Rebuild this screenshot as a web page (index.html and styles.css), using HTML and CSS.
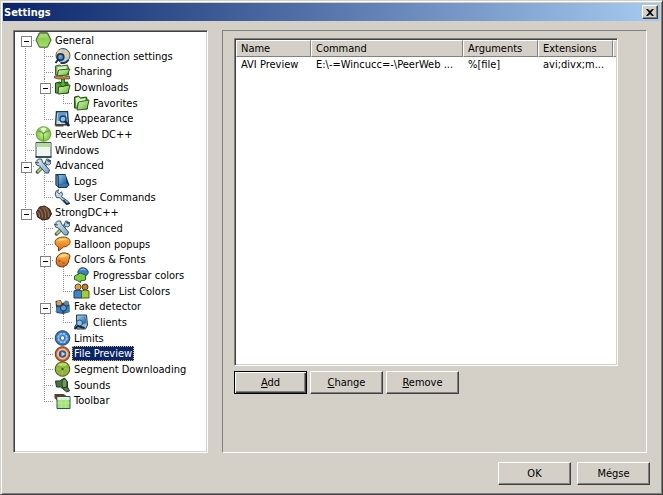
FILE: index.html
```html
<!DOCTYPE html>
<html lang="hu">

<head>
<meta charset="utf-8">
<title>Settings</title>
<link rel="stylesheet" href="styles.css">
</head>
<body>
<svg class="sprites" width="0" height="0" aria-hidden="true">
  <defs>
    <linearGradient id="green" x1="0" y1="0" x2="0" y2="1"><stop offset="0" stop-color="#7cba45"/><stop offset="1" stop-color="#a6e465"/></linearGradient>
    <linearGradient id="folder" x1="0" y1="0" x2="1" y2="1"><stop offset="0" stop-color="#e2f9c0"/><stop offset="1" stop-color="#62b32f"/></linearGradient>
    <linearGradient id="orange" x1="0" y1="0" x2="0" y2="1"><stop offset="0" stop-color="#ffc04a"/><stop offset="1" stop-color="#e2600c"/></linearGradient>
    <linearGradient id="blue" x1="0" y1="0" x2="1" y2="1"><stop offset="0" stop-color="#8cc4ee"/><stop offset="1" stop-color="#1d5596"/></linearGradient>
    <linearGradient id="steel" x1="0" y1="0" x2="1" y2="1"><stop offset="0" stop-color="#e4eef5"/><stop offset="1" stop-color="#7ba3c4"/></linearGradient>
    <radialGradient id="ball"><stop offset="0" stop-color="#d9f3b0"/><stop offset="1" stop-color="#79c43a"/></radialGradient>

    <symbol id="hexagon" viewBox="0 0 16 16"><path d="M4 .8h8L15.500 8 12 15.200H4L.5 8z" fill="url(#green)" stroke="#35561f"/><path d="M4.600 2h6.800l2 4.500q-5-2-10.800 0z" fill="#c7eb9b" opacity=".5"/></symbol>
    <symbol id="globe" viewBox="0 0 16 16"><circle cx="8.500" cy="7.500" r="7" fill="#a9c9ee" stroke="#3c5878"/><path d="M3 3l4-2 1 3-2 2-4 1zM10 2l4 3v4l-3 0-2-3zM10 11l3 0-2 2z" fill="#f2cd80"/><circle cx="6" cy="9" r="3.200" fill="#6a9bd0" stroke="#173862" stroke-width="1.800"/><path d="M4 11l-3 4" stroke="#1b3050" stroke-width="2"/><path d="M6 15q5 1 8-3" stroke="#23374f" fill="none" stroke-width="2"/></symbol>
    <symbol id="folder-open" viewBox="0 0 16 16"><path d="M1 13V2l4-1 2 2 6-1 1 4v8z" fill="#4d9130" stroke="#245018"/><path d="M2 3l3-1 2 2 5-1v4l-8 1-1 5z" fill="#d9f4bb"/><path d="M5 7l10.500-2-2 9-10 1z" fill="url(#folder)" stroke="#2c6420"/></symbol>
    <symbol id="folder-share" viewBox="0 0 16 16"><path d="M1 11V2l4-1 2 1 6-1 1 3v7z" fill="#75b44c" stroke="#38642a"/><path d="M3 3l9-1v4L3 8z" fill="#ddf3c5"/><path d="M4 6l11.500-1-3 6-10 1z" fill="url(#folder)" stroke="#2c6420"/><path d="M0 12l7 0 2 1 6-1v3H4l-4-1z" fill="#c58a45" stroke="#5d3d1c" stroke-width=".7"/></symbol>
    <symbol id="folder-down" viewBox="0 0 16 16"><path d="M1 14V4l4-1 2 1 6-1 1 4v7z" fill="#5da23a" stroke="#1c4514"/><path d="M4 8l11.500-2-2 8-10 1z" fill="url(#folder)" stroke="#245018"/><path d="M7 0h3v4h3L8.500 8 4 4h3z" fill="#4fb52d" stroke="#1c4a14" stroke-width=".8"/></symbol>
    <symbol id="appearance" viewBox="0 0 16 16"><path d="M2 .7h11l1 13-13 0z" fill="#c8dde8" stroke="#193f58" stroke-width="1.400"/><path d="M3.500 2h8l.5 8H3z" fill="#5b9dd4"/><circle cx="8.500" cy="8" r="3" fill="#8ec0ec" stroke="#1d4066" stroke-width="1.300"/><path d="M10.500 10l4 5" stroke="#15293d" stroke-width="2.800"/><path d="M1 13h8v2.500H1z" fill="#54402c"/></symbol>
    <symbol id="ball-green" viewBox="0 0 16 16"><circle cx="8" cy="8" r="7.300" fill="url(#ball)" stroke="#69a53e"/><path d="M5 2.500q3-2 6 0L8 7z" fill="#f1fbe2"/><path d="M2 5q4 0 6 3 2-3 6-3M8 8v7" fill="none" stroke="#5aa52f" stroke-width="1.200"/></symbol>
    <symbol id="window" viewBox="0 0 16 16"><path d="M.5.500h15v14.500H.5z" fill="#eef5f3" stroke="#3f5260"/><path d="M1 1h14v4H1z" fill="#b4dc97"/><path d="M0 15h16" stroke="#1d313e" stroke-width="1.500"/></symbol>
    <symbol id="tools" viewBox="0 0 16 16"><path d="M2 14L13 3" stroke="#3f5546" stroke-width="3.500" stroke-linecap="round"/><path d="M2 14l5-5" stroke="#9fd36c" stroke-width="2.200"/><path d="M7 9l6-6" stroke="#dbe6ee" stroke-width="1.500"/><path d="M1 3l2-2 3 0 1 3 7 8-1 3-3 0-6-7-3-1-1-3 2 1 1 0z" fill="url(#steel)" stroke="#304e64"/><path d="M10 4l1-3 2 0-1 2 2 1 1-2 0 4-2 1-3-1z" fill="#b5cfe0" stroke="#304e64" stroke-width=".8"/></symbol>
    <symbol id="logs" viewBox="0 0 16 16"><path d="M1 1h10l1 3 3 8-3 3H4l-3-3z" fill="#17354f"/><path d="M4 2h7l1 8-8 2z" fill="url(#blue)"/><path d="M4 12l8-2 2 2-3 2H4z" fill="#3d79b5"/><path d="M1.500 1.500V12l2.500 2.500V3z" fill="#557da2" stroke="#173049" stroke-width=".6"/></symbol>
    <symbol id="wrench" viewBox="0 0 16 16"><path d="M4 .7l-1 3 2 1 2-2 1 3-1 2 7 5 1 2-3 1-7-7-3 0L.7 5l1-3z" fill="url(#steel)" stroke="#38536d"/><path d="M9 11l3 4 3-1" stroke="#1f3346" fill="none" stroke-width="1.500"/></symbol>
    <symbol id="shell" viewBox="0 0 16 16"><path d="M1 7l3-5 5-1 5 3 2 5-3 5-6 1-5-3z" fill="#5c3b29" stroke="#2d1a12"/><path d="M3 4q4 1 4 9M6 2q5 2 4 12M9 2q5 3 4 10" stroke="#8a6450" fill="none" stroke-width="1.300"/><path d="M1 7q3 0 3 5" stroke="#a58a76" fill="none"/></symbol>
    <symbol id="balloon" viewBox="0 0 16 16"><path d="M8 1C-1.500 2-1 9 4 11l0 4 5-4c9-1 9-10-1-10z" fill="url(#orange)" stroke="#8d3c0c"/><path d="M3 5q4-4 10-1-5 0-10 1z" fill="#ffe3a0"/></symbol>
    <symbol id="palette" viewBox="0 0 16 16"><path d="M2 6q3-6 9-5 6 1 4 5-1 2-1 4-1 4-6 5-8 0-6-9z" fill="url(#orange)" stroke="#6f3514"/><path d="M4 5q4-4 9-2-2 3-9 2z" fill="#ffdf9c"/><circle cx="5" cy="9" r="1.300" fill="#d0452a"/><circle cx="9" cy="11" r="1.300" fill="#5c8474"/></symbol>
    <symbol id="progress" viewBox="0 0 16 16"><path d="M5 3q3-4 8-1 4 4-1 7l-2 2-3-3q-4-1-2-5z" fill="#3b7fce" stroke="#1c3c68"/><path d="M7 3q3-2 5 0" stroke="#a7d0f4" fill="none"/><path d="M1 9l6-3 5 2 0 5-5 1 0 1.500-3-2-3-1z" fill="#79cf3f" stroke="#296423"/></symbol>
    <symbol id="users" viewBox="0 0 16 16"><circle cx="4.500" cy="4" r="3" fill="#dca63f" stroke="#694619"/><circle cx="11.500" cy="4" r="3" fill="#b9822f" stroke="#523816"/><path d="M.5 15V8l4-1 4 1v7z" fill="#3e83cd" stroke="#1a3963"/><path d="M8 15V8l4-1 3.500 1v7z" fill="#a5cc37" stroke="#40641c"/></symbol>
    <symbol id="fake" viewBox="0 0 16 16"><path d="M1 2l5-1 2 3 5-2 2 4v7l-6 2-7-1z" fill="#263e56"/><circle cx="4.500" cy="4" r="2.500" fill="#d99b44"/><circle cx="12" cy="4" r="2.500" fill="#65869c"/><path d="M1 13l1-5 6 0v6zM9 8l6-1v6l-5 1z" fill="#387dbb"/><circle cx="9" cy="9" r="3" fill="#5d9cd6" stroke="#1b3c5c"/></symbol>
    <symbol id="clients" viewBox="0 0 16 16"><path d="M3 1h10l1 10-2 4H3l-2-2 2-3z" fill="#98b9cd" stroke="#243c50"/><path d="M6 3l6-1 1 7-5 2-3-4z" fill="url(#blue)"/><circle cx="6" cy="9" r="3" fill="#8dbfea" stroke="#245181"/><path d="M1 15l3-3 7 2" stroke="#17293a" stroke-width="2" fill="none"/></symbol>
    <symbol id="gear" viewBox="0 0 16 16"><circle cx="8" cy="8" r="7.300" fill="#3477bd" stroke="#1e477b"/><circle cx="8" cy="8" r="4.500" fill="#5b98d2" stroke="#a5cdf0" stroke-width="1.500" stroke-dasharray="2.500 1"/><circle cx="8" cy="8" r="2.300" fill="#f8fcff" stroke="#2b67a8"/></symbol>
    <symbol id="preview" viewBox="0 0 16 16"><circle cx="8" cy="8" r="7.300" fill="#e06119" stroke="#7c3214"/><circle cx="8" cy="8" r="5" fill="#d2dce8" stroke="#ffc58e"/><circle cx="8" cy="8" r="3.800" fill="#2f5580"/><path d="M7 5.500v5L11 8z" fill="#c6d8e8"/></symbol>
    <symbol id="segment" viewBox="0 0 16 16"><circle cx="8" cy="8" r="7.300" fill="#8fb238" stroke="#3a561b"/><path d="M3 4q5-4 10 0-5 2-10 0z" fill="#c8dc78"/><path d="M2 8h12M8 3v10" stroke="#a9c752"/><circle cx="8" cy="8" r="1.200" fill="#3e5718"/></symbol>
    <symbol id="sound" viewBox="0 0 16 16"><path d="M1 4l4 0 5-3 3 4 0 7-3 1-4-3-4 0z" fill="#4b7440" stroke="#1d3819"/><ellipse cx="10" cy="6.500" rx="2.500" ry="4.500" fill="#6f9a5e" stroke="#23421e"/><path d="M8 11l5-1 2 4-3 1z" fill="#55804a" stroke="#233c20"/></symbol>
    <symbol id="toolbar" viewBox="0 0 16 16"><path d="M0 1h9l3 2v5H3L0 5z" fill="#6f3726"/><path d="M2.500 3.500h13v12h-13z" fill="#a4e273" stroke="#1f526d"/><path d="M3 4h12v3H3z" fill="#e3f5d8"/><path d="M7 6v9M11 6v9M3 10h12" stroke="#bdec94"/></symbol>
  </defs>
</svg>

<form class="window">
  <header class="titlebar">
    <h1 class="titlebar__text">Settings</h1>
    <button class="titlebar__close" type="button" aria-label="Close">
      <svg width="8" height="7" viewBox="0 0 8 7"><path d="M0 0h2l2 2 2-2h2L5 3.500 8 7H6L4 5 2 7H0l3-3.500z"/></svg>
    </button>
  </header>

  <main class="content">
    <ul class="tree" role="tree" aria-label="Settings">
      <li class="node" role="treeitem" aria-level="1" aria-expanded="true"><i class="guide guide--first guide--box"></i><svg class="node__icon"><use href="#hexagon"/></svg><span class="node__label">General</span></li>
      <li class="node" role="treeitem" aria-level="2"><i class="guide guide--line"></i><i class="guide guide--tee"></i><svg class="node__icon"><use href="#globe"/></svg><span class="node__label">Connection settings</span></li>
      <li class="node" role="treeitem" aria-level="2"><i class="guide guide--line"></i><i class="guide guide--tee"></i><svg class="node__icon"><use href="#folder-share"/></svg><span class="node__label">Sharing</span></li>
      <li class="node" role="treeitem" aria-level="2" aria-expanded="true"><i class="guide guide--line"></i><i class="guide guide--tee guide--box"></i><svg class="node__icon"><use href="#folder-down"/></svg><span class="node__label">Downloads</span></li>
      <li class="node" role="treeitem" aria-level="3"><i class="guide guide--line"></i><i class="guide guide--line"></i><i class="guide guide--last"></i><svg class="node__icon"><use href="#folder-open"/></svg><span class="node__label">Favorites</span></li>
      <li class="node" role="treeitem" aria-level="2"><i class="guide guide--line"></i><i class="guide guide--last"></i><svg class="node__icon"><use href="#appearance"/></svg><span class="node__label">Appearance</span></li>
      <li class="node" role="treeitem" aria-level="1"><i class="guide guide--tee"></i><svg class="node__icon"><use href="#ball-green"/></svg><span class="node__label">PeerWeb DC++</span></li>
      <li class="node" role="treeitem" aria-level="1"><i class="guide guide--tee"></i><svg class="node__icon"><use href="#window"/></svg><span class="node__label">Windows</span></li>
      <li class="node" role="treeitem" aria-level="1" aria-expanded="true"><i class="guide guide--tee guide--box"></i><svg class="node__icon"><use href="#tools"/></svg><span class="node__label">Advanced</span></li>
      <li class="node" role="treeitem" aria-level="2"><i class="guide guide--line"></i><i class="guide guide--tee"></i><svg class="node__icon"><use href="#logs"/></svg><span class="node__label">Logs</span></li>
      <li class="node" role="treeitem" aria-level="2"><i class="guide guide--line"></i><i class="guide guide--last"></i><svg class="node__icon"><use href="#wrench"/></svg><span class="node__label">User Commands</span></li>
      <li class="node" role="treeitem" aria-level="1" aria-expanded="true"><i class="guide guide--last guide--box"></i><svg class="node__icon"><use href="#shell"/></svg><span class="node__label">StrongDC++</span></li>
      <li class="node" role="treeitem" aria-level="2"><i class="guide"></i><i class="guide guide--tee"></i><svg class="node__icon"><use href="#tools"/></svg><span class="node__label">Advanced</span></li>
      <li class="node" role="treeitem" aria-level="2"><i class="guide"></i><i class="guide guide--tee"></i><svg class="node__icon"><use href="#balloon"/></svg><span class="node__label">Balloon popups</span></li>
      <li class="node" role="treeitem" aria-level="2" aria-expanded="true"><i class="guide"></i><i class="guide guide--tee guide--box"></i><svg class="node__icon"><use href="#palette"/></svg><span class="node__label">Colors &amp; Fonts</span></li>
      <li class="node" role="treeitem" aria-level="3"><i class="guide"></i><i class="guide guide--line"></i><i class="guide guide--tee"></i><svg class="node__icon"><use href="#progress"/></svg><span class="node__label">Progressbar colors</span></li>
      <li class="node" role="treeitem" aria-level="3"><i class="guide"></i><i class="guide guide--line"></i><i class="guide guide--last"></i><svg class="node__icon"><use href="#users"/></svg><span class="node__label">User List Colors</span></li>
      <li class="node" role="treeitem" aria-level="2" aria-expanded="true"><i class="guide"></i><i class="guide guide--tee guide--box"></i><svg class="node__icon"><use href="#fake"/></svg><span class="node__label">Fake detector</span></li>
      <li class="node" role="treeitem" aria-level="3"><i class="guide"></i><i class="guide guide--line"></i><i class="guide guide--last"></i><svg class="node__icon"><use href="#clients"/></svg><span class="node__label">Clients</span></li>
      <li class="node" role="treeitem" aria-level="2"><i class="guide"></i><i class="guide guide--tee"></i><svg class="node__icon"><use href="#gear"/></svg><span class="node__label">Limits</span></li>
      <li class="node node--selected" role="treeitem" aria-level="2" aria-selected="true"><i class="guide"></i><i class="guide guide--tee"></i><svg class="node__icon"><use href="#preview"/></svg><span class="node__label">File Preview</span></li>
      <li class="node" role="treeitem" aria-level="2"><i class="guide"></i><i class="guide guide--tee"></i><svg class="node__icon"><use href="#segment"/></svg><span class="node__label">Segment Downloading</span></li>
      <li class="node" role="treeitem" aria-level="2"><i class="guide"></i><i class="guide guide--tee"></i><svg class="node__icon"><use href="#sound"/></svg><span class="node__label">Sounds</span></li>
      <li class="node" role="treeitem" aria-level="2"><i class="guide"></i><i class="guide guide--last"></i><svg class="node__icon"><use href="#toolbar"/></svg><span class="node__label">Toolbar</span></li>
    </ul>

    <section class="page">
      <div class="list">
        <table class="list__table">
          <colgroup><col class="col-text"><col><col class="col-text"><col class="col-text"><col class="col-rest"></colgroup>
          <thead>
            <tr><th>Name</th><th>Command</th><th>Arguments</th><th>Extensions</th><td></td></tr>
          </thead>
          <tbody>
            <tr><td>AVI Preview</td><td>E:\-=Wincucc=-\PeerWeb ...</td><td>%[file]</td><td>avi;divx;m...</td><td></td></tr>
          </tbody>
        </table>
      </div>
      <div class="page__buttons">
        <button class="button button--default" type="button"><u>A</u>dd</button>
        <button class="button" type="button"><u>C</u>hange</button>
        <button class="button" type="button"><u>R</u>emove</button>
      </div>
    </section>
  </main>

  <footer class="footer">
    <button class="button" type="submit">OK</button>
    <button class="button" type="button">Mégse</button>
  </footer>
</form>
</body>
</html>
```
FILE: styles.css
```css
* { box-sizing: border-box; }
body {
  margin: 0;
  background: #d4d0c8;
  color: #000;
  font: 11px/15px Tahoma, "DejaVu Sans Condensed", sans-serif;
}

.sprites {
  position: absolute;
}

.window {
  display: flex;
  flex-direction: column;
  min-height: 100vh;
  padding: 1px;
  border: 1px solid;
  border-color: #d4d0c8 #404040 #404040 #d4d0c8;
  box-shadow: inset 1px 1px #fff, inset -1px -1px #808080;
}

.titlebar {
  display: flex;
  align-items: center;
  justify-content: space-between;
  height: 18px;
  margin: 1px 1px 0;
  padding: 0 2px 0 1px;
  background: linear-gradient(to right, #0a246a, #a6caf0);
}

.titlebar__text {
  margin: 0;
  color: #fff;
  font-size: 11px;
  font-weight: bold;
}

.titlebar__close {
  display: flex;
  align-items: center;
  justify-content: center;
  width: 16px;
  height: 14px;
  padding: 0;
  border: 1px solid;
  border-color: #fff #404040 #404040 #fff;
  box-shadow: inset -1px -1px #808080;
  background: #d4d0c8;
}

.content {
  display: grid;
  grid-template-columns: 195px 1fr;
  gap: 14px;
  flex: 1;
  padding: 9px 14px 0 11px;
}

/* Tree */

.tree {
  display: grid;
  grid-auto-rows: 16px 16px 15px;
  align-content: start;
  margin: 0;
  padding: 1px 2px;
  list-style: none;
  background: #fff;
  border: 1px solid;
  border-color: #808080 #fff #fff #808080;
  box-shadow: inset 1px 1px #404040, inset -1px -1px #d4d0c8;
}

.node {
  display: flex;
  align-items: center;
  white-space: nowrap;
}

.node__icon {
  width: 17px;
  height: 16px;
  flex: none;
}

.node__label {
  margin-left: 1px;
  padding: 0 2px;
}

.node--selected .node__label {
  background: #0a246a;
  color: #fff;
  outline: 1px dotted #e0c060;
  outline-offset: -1px;
}

.guide {
  position: relative;
  align-self: stretch;
  flex: none;
  width: 19px;
}

.guide--line,
.guide--tee,
.guide--last,
.guide--first {
  --down: repeating-linear-gradient(to bottom, #909090 0 1px, #fff 1px 2px);
  --across: repeating-linear-gradient(to right, #909090 0 1px, #fff 1px 2px);
  background-repeat: no-repeat;
}

.guide--line {
  background-image: var(--down);
  background-position: 9px 0;
  background-size: 1px 100%;
}

.guide--tee,
.guide--last,
.guide--first {
  background-image: var(--down), var(--across);
  background-position: 9px 0, 9px 8px;
  background-size: 1px 100%, 10px 1px;
}

.guide--last {
  background-size: 1px 8px, 10px 1px;
}

.guide--first {
  background-position: 9px 8px, 9px 8px;
  background-size: 1px 8px, 10px 1px;
}

/* Minus box over the guide lines */
.guide--box::before {
  content: "";
  position: absolute;
  top: 4px;
  left: 5px;
  width: 9px;
  height: 9px;
  border: 1px solid #808080;
  background: linear-gradient(#000, #000) center / 5px 1px no-repeat #fff;
}

/* Settings page */

.page {
  display: flex;
  flex-direction: column;
  padding: 7px 28px 58px 11px;
  border: 1px solid;
  border-color: #808080 #fff #fff #808080;
}

.list {
  flex: 1;
  padding: 1px;
  background: #fff;
  border: 1px solid;
  border-color: #808080 #fff #fff #808080;
  box-shadow: inset 1px 1px #404040, inset -1px -1px #d4d0c8;
}

.list__table {
  width: 100%;
  table-layout: fixed;
  border-collapse: separate;
  border-spacing: 0;
}

.list__table th,
.list__table td {
  padding: 0 0 0 5px;
  font-weight: normal;
  text-align: left;
  white-space: nowrap;
  overflow: hidden;
}

.list__table thead th,
.list__table thead td {
  background: #d4d0c8;
  border: 1px solid;
  border-color: #fff #808080 #808080 #fff;
  padding-left: 4px;
}

.list__table thead td {
  border-right: 0;
  padding: 0;
}

.col-text { width: 75px; }
.col-rest { width: 3px; }

.page__buttons {
  display: flex;
  gap: 3px;
  margin-top: 5px;
}

.button {
  width: 73px;
  height: 23px;
  padding: 0;
  border: 1px solid;
  border-color: #fff #404040 #404040 #fff;
  box-shadow: inset -1px -1px #808080;
  background: #d4d0c8;
  color: #000;
  font: inherit;
}

.button--default {
  border-color: #000;
  box-shadow: inset 1px 1px #fff, inset -1px -1px #404040, inset -2px -2px #808080;
}

.footer {
  display: flex;
  justify-content: flex-end;
  gap: 6px;
  padding: 9px 11px 8px;
}
```
